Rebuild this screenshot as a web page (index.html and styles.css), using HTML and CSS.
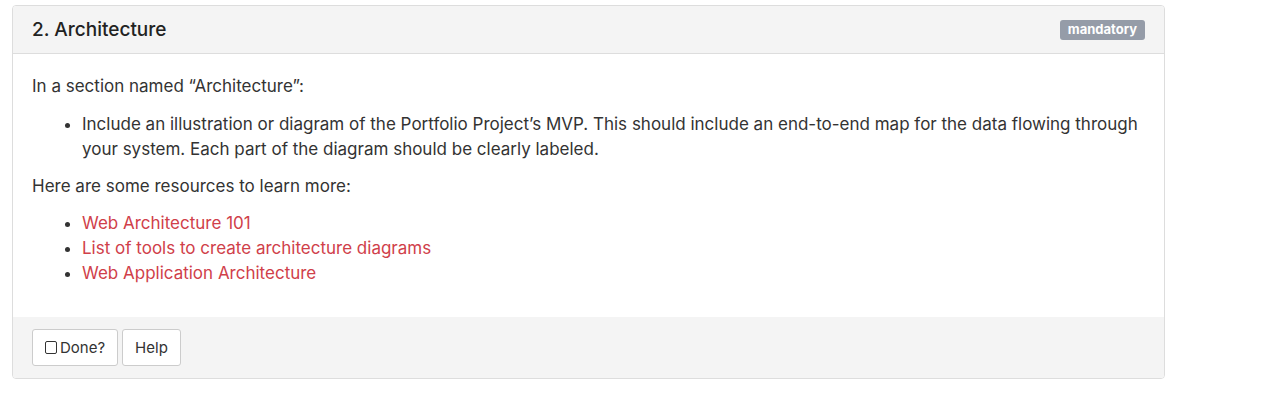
FILE: index.html
```html
<!DOCTYPE html>
<html>
<head>
<meta charset="utf-8">
<link rel="stylesheet" href="styles.css">
</head>
<body>
<div class="page">
  <div class="panel">
    <div class="panel-heading">
      <h3 class="panel-title">2. Architecture</h3>
      <span class="badge">mandatory</span>
    </div>
    <div class="panel-body">
      <p>In a section named “Architecture”:</p>
      <ul>
        <li>Include an illustration or diagram of the Portfolio Project’s MVP. This should include an end-to-end map for the data flowing through your system. Each part of the diagram should be clearly labeled.</li>
      </ul>
      <p class="tight">Here are some resources to learn more:</p>
      <ul class="links">
        <li><a href="#">Web Architecture 101</a></li>
        <li><a href="#">List of tools to create architecture diagrams</a></li>
        <li><a href="#">Web Application Architecture</a></li>
      </ul>
    </div>
    <div class="panel-footer">
      <button class="btn"><span class="box"></span>Done?</button>
      <button class="btn">Help</button>
    </div>
  </div>
</div>
</body>
</html>
```
FILE: styles.css
```css
html, body {
  margin: 0;
  padding: 0;
  background: #fff;
}
body {
  font-family: Inter, "Open Sans", sans-serif;
  color: #333;
  font-size: 17px;
}
.page {
  padding: 5px 105px 0 12px;
}
.panel {
  border: 1px solid #ddd;
  border-radius: 4px;
  overflow: hidden;
}
.panel-heading {
  background: #f4f4f4;
  border-bottom: 1px solid #ddd;
  display: flex;
  align-items: center;
  justify-content: space-between;
  padding: 9px 19px;
  height: 29px;
}
.panel-title {
  margin: 0;
  font-size: 19px;
  font-weight: 500;
  color: #222;
}
.badge {
  background: #959ca8;
  color: #fff;
  font-size: 13px;
  font-weight: 700;
  padding: 3px 8px 4px;
  border-radius: 3px;
  line-height: 13px;
}
.panel-body {
  padding: 20px 19px 31px;
  line-height: 25px;
  font-size: 17px;
}
.panel-body p {
  margin: 0 0 13px;
}
.panel-body p.tight {
  margin-bottom: 12px;
}
.panel-body ul {
  margin: 0 0 12px;
  padding-left: 50px;
}
.panel-body ul.links {
  margin: 0;
}
.panel-body a {
  color: #d0404a;
  text-decoration: none;
}
.panel-footer {
  background: #f4f4f4;
  padding: 12px 19px;
  display: flex;
  gap: 4px;
}
.btn {
  font-family: Inter, "Open Sans", sans-serif;
  font-size: 15px;
  color: #333;
  background: #fff;
  border: 1px solid #ccc;
  border-radius: 3px;
  height: 37px;
  padding: 0 12px;
  display: flex;
  align-items: center;
}
.box {
  display: inline-block;
  width: 10px;
  height: 11px;
  border: 1px solid #333;
  border-radius: 2px;
  margin-right: 3px;
}
```
